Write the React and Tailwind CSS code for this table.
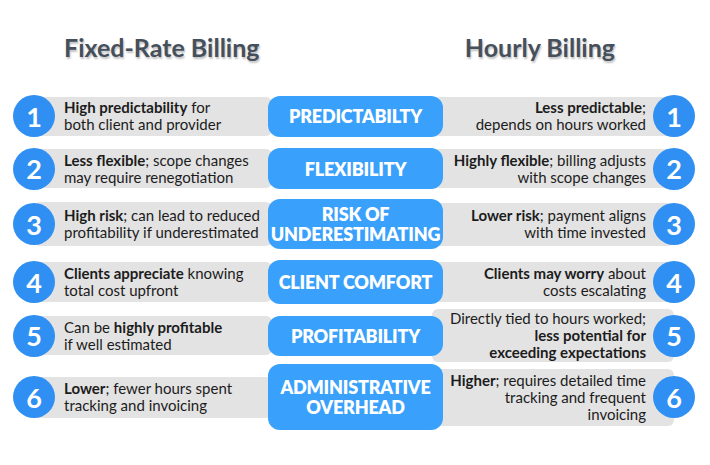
import React from 'react'

const rows = [
  {
    n: 1, label: ['PREDICTABILTY'], mt: 'mt-0', h: 'h-[42px]', boxH: 'h-[41px]',
    lh: 'h-[39px]', rh: 'h-[39px]',
    left: <><b>High predictability</b> for<br />both client and provider</>,
    right: <><b>Less predictable</b>;<br />depends on hours worked</>,
  },
  {
    n: 2, label: ['FLEXIBILITY'], mt: 'mt-[10px]', h: 'h-[43px]', boxH: 'h-[41px]',
    lh: 'h-[39px]', rh: 'h-[39px]',
    left: <><b>Less flexible</b>; scope changes<br />may require renegotiation</>,
    right: <><b>Highly flexible</b>; billing adjusts<br />with scope changes</>,
  },
  {
    n: 3, label: ['RISK OF', 'UNDERESTIMATING'], mt: 'mt-[9px]', h: 'h-[50px]', boxH: 'h-[50px]',
    lh: 'h-[44px]', rh: 'h-[43px]',
    left: <><b>High risk</b>; can lead to reduced<br />profitability if underestimated</>,
    right: <><b>Lower risk</b>; payment aligns<br />with time invested</>,
  },
  {
    n: 4, label: ['CLIENT COMFORT'], mt: 'mt-[11px]', h: 'h-[44px]', boxH: 'h-[44px]',
    lh: 'h-[40px]', rh: 'h-[40px]',
    left: <><b>Clients appreciate</b> knowing<br />total cost upfront</>,
    right: <><b>Clients may worry</b> about<br />costs escalating</>,
  },
  {
    n: 5, label: ['PROFITABILITY'], mt: 'mt-[5px]', h: 'h-[53px]', boxH: 'h-[40px]',
    lh: 'h-[39px]', rh: 'h-[53px]',
    left: <>Can be <b>highly profitable</b><br />if well estimated</>,
    right: <>Directly tied to hours worked;<br /><b>less potential for</b><br /><b>exceeding expectations</b></>,
  },
  {
    n: 6, label: ['ADMINISTRATIVE', 'OVERHEAD'], mt: 'mt-[2px]', h: 'h-[66px]', boxH: 'h-[66px]',
    lh: 'h-[41px]', rh: 'h-[57px]',
    left: <><b>Lower</b>; fewer hours spent<br />tracking and invoicing</>,
    right: <><b>Higher</b>; requires detailed time<br />tracking and frequent<br />invoicing</>,
  },
]

function Circle ({ n }) {
  return (
    <div className="relative z-10 flex h-[42px] w-[42px] shrink-0 items-center justify-center rounded-full bg-[#2f8ff3] text-[27px] font-bold leading-none text-white">
      {n}
    </div>
  )
}

function Row ({ row }) {
  return (
    <div className={`flex items-center ${row.mt} ${row.h}`}>
      <div className="ml-[13px] flex items-center">
        <Circle n={row.n} />
        <div className={`-ml-[21px] flex w-[238px] items-center rounded-[6px] bg-[#e3e3e3] pl-[30px] text-[15px] leading-[17px] text-[#1c1c1c] ${row.lh}`}>
          <p>{row.left}</p>
        </div>
      </div>
      <div className={`relative z-10 -ml-[4px] flex w-[175px] shrink-0 flex-col items-center justify-center rounded-[12px] bg-[#39a0fb] text-[18px] font-extrabold leading-[20px] tracking-[-0.2px] text-white ${row.boxH}`}>
        {row.label.map(l => <span key={l}>{l}</span>)}
      </div>
      <div className="flex items-center">
        <div className={`-ml-[11px] flex w-[242px] items-center justify-end rounded-[6px] bg-[#e3e3e3] pr-[28px] text-right text-[15px] leading-[17px] text-[#1c1c1c] ${row.rh}`}>
          <p>{row.right}</p>
        </div>
        <div className="-ml-[21px]">
          <Circle n={row.n} />
        </div>
      </div>
    </div>
  )
}

export default function App () {
  return (
    <div className="h-[465px] w-[710px] bg-white font-['Lato',sans-serif]">
      <div className="flex h-[95px] items-center text-[25px] font-bold text-[#46505c] [text-shadow:1px_2px_2px_rgba(0,0,0,0.25)]">
        <h2 className="ml-[64px]">Fixed-Rate Billing</h2>
        <h2 className="ml-auto mr-[95px]">Hourly Billing</h2>
      </div>
      {rows.map(r => <Row key={r.n} row={r} />)}
    </div>
  )
}
